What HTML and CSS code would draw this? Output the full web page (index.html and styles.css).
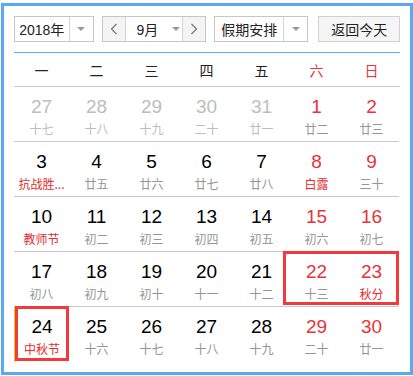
FILE: index.html
```html
<!DOCTYPE html>
<html lang="zh-CN">
<head>
<meta charset="utf-8">
<title>日历</title>
<link rel="stylesheet" href="styles.css">
</head>
<body>
<div class="cal">
  <div class="toolbar">
    <div class="sel sel-year">
      <span class="sel-text">2018年</span>
      <span class="sel-arrow"><i class="tri"></i></span>
    </div>
    <div class="month-group">
      <span class="nav"><svg width="8" height="12" viewBox="0 0 8 12"><polyline points="6.5,1 1.5,6 6.5,11" fill="none" stroke="#777" stroke-width="1.2"/></svg></span>
      <div class="month-sel"><span>9月</span><i class="tri"></i></div>
      <span class="nav"><svg width="8" height="12" viewBox="0 0 8 12"><polyline points="1.5,1 6.5,6 1.5,11" fill="none" stroke="#777" stroke-width="1.2"/></svg></span>
    </div>
    <div class="sel sel-holiday">
      <span class="sel-text">假期安排</span>
      <span class="sel-arrow"><i class="tri"></i></span>
    </div>
    <span class="today-btn">返回今天</span>
  </div>
  <div class="weekdays">
    <span>一</span><span>二</span><span>三</span><span>四</span><span>五</span><span class="wk">六</span><span class="wk">日</span>
  </div>
  <div class="grid">
    <div class="cell other"><b>27</b><small>十七</small></div>
    <div class="cell other"><b>28</b><small>十八</small></div>
    <div class="cell other"><b>29</b><small>十九</small></div>
    <div class="cell other"><b>30</b><small>二十</small></div>
    <div class="cell other"><b>31</b><small>廿一</small></div>
    <div class="cell wk"><b>1</b><small>廿二</small></div>
    <div class="cell wk"><b>2</b><small>廿三</small></div>

    <div class="cell"><b>3</b><small class="fest">抗战胜...</small></div>
    <div class="cell"><b>4</b><small>廿五</small></div>
    <div class="cell"><b>5</b><small>廿六</small></div>
    <div class="cell"><b>6</b><small>廿七</small></div>
    <div class="cell"><b>7</b><small>廿八</small></div>
    <div class="cell wk"><b>8</b><small class="fest">白露</small></div>
    <div class="cell wk"><b>9</b><small>三十</small></div>

    <div class="cell"><b>10</b><small class="fest">教师节</small></div>
    <div class="cell"><b>11</b><small>初二</small></div>
    <div class="cell"><b>12</b><small>初三</small></div>
    <div class="cell"><b>13</b><small>初四</small></div>
    <div class="cell"><b>14</b><small>初五</small></div>
    <div class="cell wk"><b>15</b><small>初六</small></div>
    <div class="cell wk"><b>16</b><small>初七</small></div>

    <div class="cell"><b>17</b><small>初八</small></div>
    <div class="cell"><b>18</b><small>初九</small></div>
    <div class="cell"><b>19</b><small>初十</small></div>
    <div class="cell"><b>20</b><small>十一</small></div>
    <div class="cell"><b>21</b><small>十二</small></div>
    <div class="cell wk"><b>22</b><small>十三</small></div>
    <div class="cell wk"><b>23</b><small class="fest">秋分</small></div>

    <div class="cell today"><b>24</b><small class="fest">中秋节</small></div>
    <div class="cell"><b>25</b><small>十六</small></div>
    <div class="cell"><b>26</b><small>十七</small></div>
    <div class="cell"><b>27</b><small>十八</small></div>
    <div class="cell"><b>28</b><small>十九</small></div>
    <div class="cell wk"><b>29</b><small>二十</small></div>
    <div class="cell wk"><b>30</b><small>廿一</small></div>

    <div class="mark mark-range"></div>
    <div class="mark mark-today"></div>
  </div>
</div>
</body>
</html>
```

FILE: styles.css
```css
html, body {
  margin: 0;
  padding: 0;
  background: #fff;
}

body {
  font-family: "Liberation Sans", "Noto Sans CJK SC", sans-serif;
  color: #000;
}

.cal {
  box-sizing: border-box;
  width: 412px;
  margin: 3px 0 0 1px;
  border: 3px solid #5ba8f5;
  padding: 10px 10px 10px 10px;
}

/* toolbar */
.toolbar {
  display: flex;
  align-items: stretch;
  height: 26px;
  padding-bottom: 10px;
  border-bottom: 1px solid #5ba8f5;
}

.sel {
  box-sizing: border-box;
  display: flex;
  border: 1px solid #c6c6c6;
  background: #fff;
  font-size: 14px;
  color: #222;
}

.sel-year {
  width: 80px;
}

.sel-holiday {
  width: 95px;
  margin-left: 8px;
}

.sel-text {
  flex: 1;
  display: flex;
  align-items: center;
  justify-content: center;
  font-family: "Liberation Sans", "Noto Sans CJK SC", sans-serif;
}

.sel-arrow {
  width: 23px;
  border-left: 1px solid #d4d4d4;
  display: flex;
  align-items: center;
  justify-content: center;
}

.tri {
  display: block;
  width: 0;
  height: 0;
  border-left: 4px solid transparent;
  border-right: 4px solid transparent;
  border-top: 4px solid #999;
}

.month-group {
  box-sizing: border-box;
  display: flex;
  width: 105px;
  margin-left: 8px;
  border: 1px solid #c6c6c6;
}

.nav {
  width: 22px;
  background: #f4f4f4;
  display: flex;
  align-items: center;
  justify-content: center;
}

.month-group .nav:first-child {
  border-right: 1px solid #d4d4d4;
}

.month-group .nav:last-child {
  border-left: 1px solid #d4d4d4;
}

.month-sel {
  flex: 1;
  display: flex;
  align-items: center;
  padding-left: 11px;
  font-size: 14px;
  color: #222;
}

.month-sel .tri {
  margin-left: 14px;
}

.today-btn {
  box-sizing: border-box;
  width: 82px;
  margin-left: 10px;
  border: 1px solid #d0d0d0;
  background: #f5f5f5;
  display: flex;
  align-items: center;
  justify-content: center;
  font-size: 14px;
  color: #222;
}

/* weekdays */
.weekdays {
  display: grid;
  grid-template-columns: repeat(7, 55px);
  height: 33px;
  border-bottom: 1px solid #c8c8c8;
  align-items: center;
  font-family: "Noto Sans CJK SC", sans-serif;
  font-size: 14px;
  color: #222;
}

.weekdays span {
  text-align: center;
}

.weekdays .wk {
  color: #e8333a;
}

/* grid */
.grid {
  position: relative;
  display: grid;
  grid-template-columns: repeat(7, 55px);
  grid-auto-rows: 55px;
}

.cell {
  box-sizing: border-box;
  border-bottom: 1px solid #c8c8c8;
  display: flex;
  flex-direction: column;
  align-items: center;
  padding-top: 9px;
}

.cell:nth-last-child(-n+9) {
  border-bottom: none;
}

.cell b {
  font-weight: normal;
  font-size: 19px;
  line-height: 22px;
  color: #000;
}

.cell small {
  font-family: "Noto Sans CJK SC", sans-serif;
  font-size: 12px;
  line-height: 17px;
  color: #959595;
  margin-top: 2px;
}

.cell.other b {
  color: #bdbdbd;
}

.cell.other small {
  color: #bdbdbd;
}

.cell.wk b {
  color: #e8333a;
}

.cell small.fest {
  color: #e52b2b;
}

.cell.today {
  border-left: 1px solid #f3c21b;
}

.mark {
  position: absolute;
  box-sizing: border-box;
  border: 3px solid #f23a3a;
  pointer-events: none;
}

.mark-range {
  left: 269px;
  top: 164px;
  width: 116px;
  height: 54px;
}

.mark-today {
  left: 1px;
  top: 219px;
  width: 54px;
  height: 55px;
}
```
